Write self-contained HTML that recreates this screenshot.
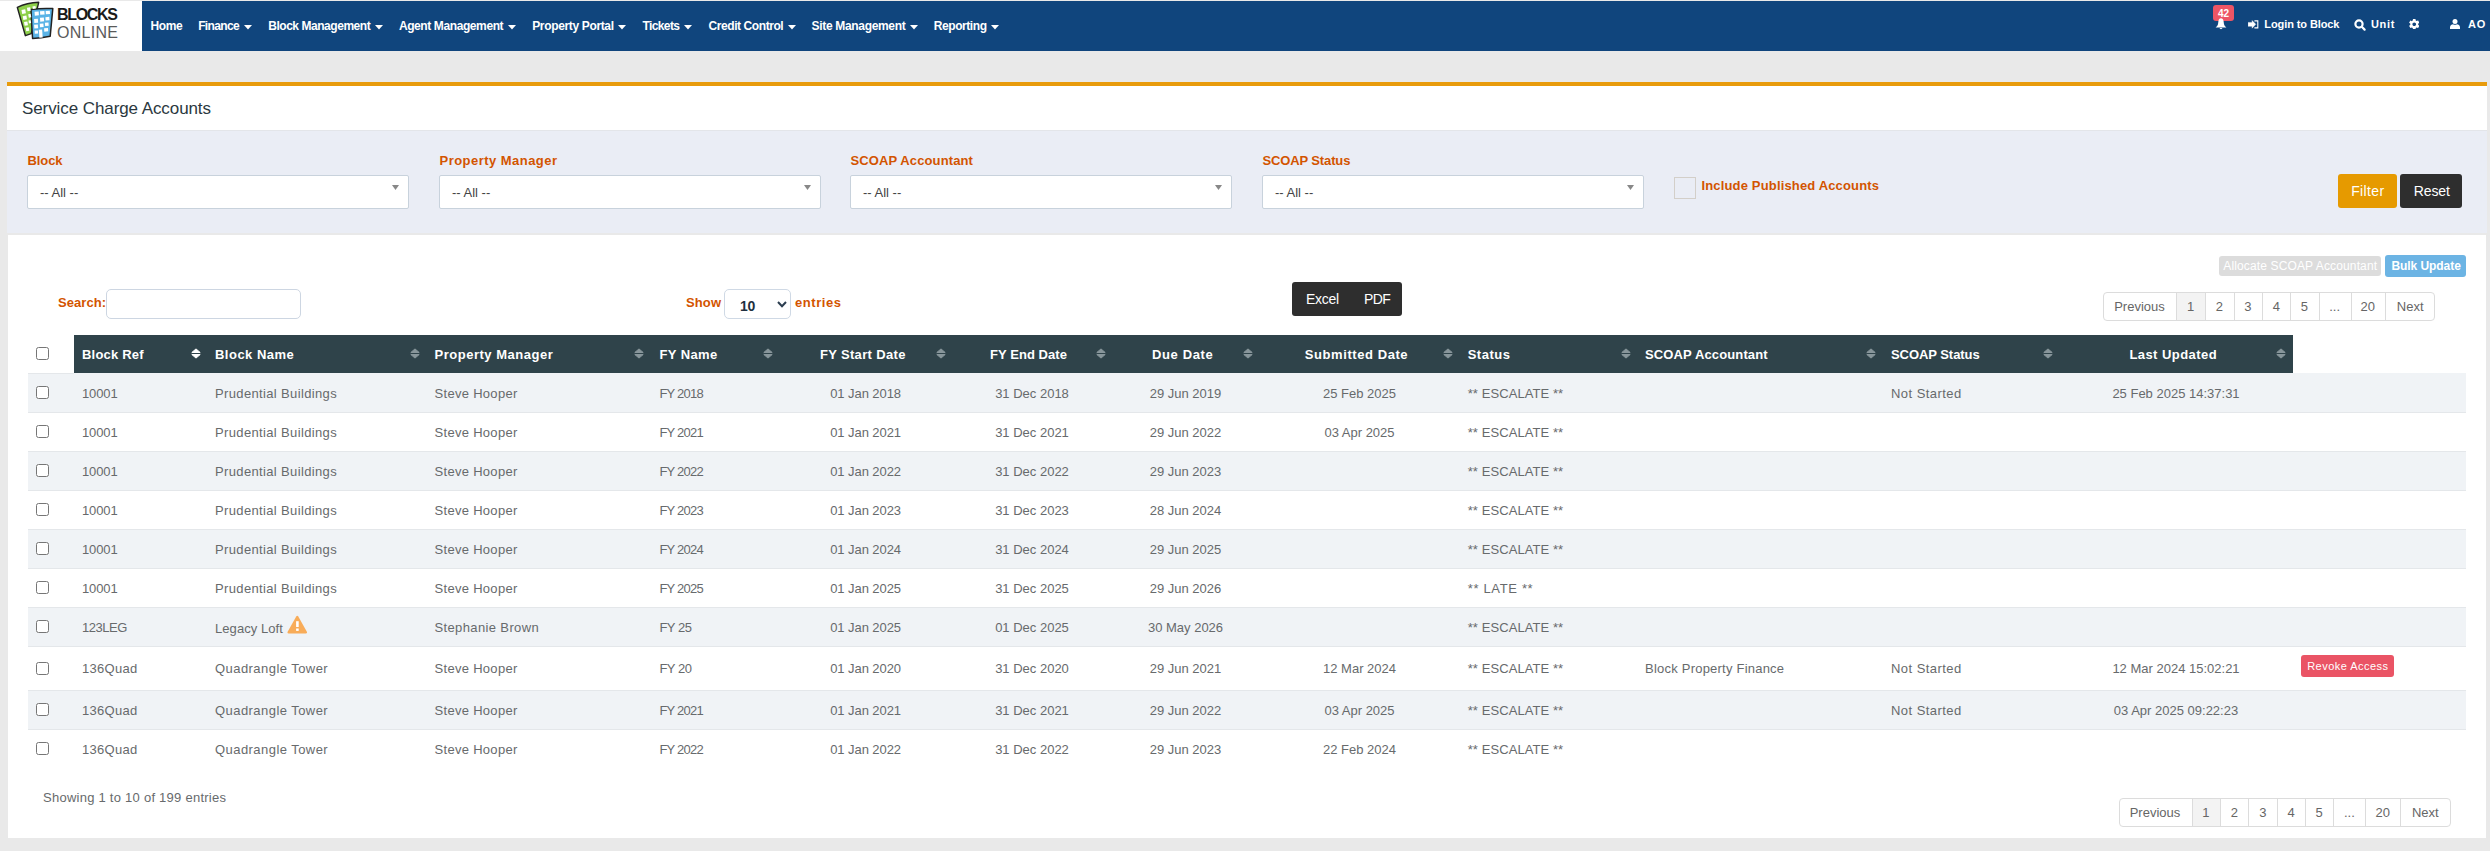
<!DOCTYPE html>
<html><head><meta charset="utf-8"><style>
html,body{margin:0;padding:0;}
body{width:2490px;height:851px;overflow:hidden;background:#e9e9e9;position:relative;font-family:"Liberation Sans",sans-serif;}
body>div{position:absolute;}
.t{line-height:20px;white-space:nowrap;}
</style></head><body>
<div style="left:0px;top:1px;width:142px;height:50px;background:#fff"></div>
<div style="left:142px;top:1px;width:2348px;height:50px;background:#10457d"></div>
<svg style="position:absolute;left:14px;top:0px" width="44" height="44" viewBox="0 0 44 44">
<path d="M3.3 7.3 Q13 3 24.7 2.3 L17.2 33.6 L11.4 35.7 Z" fill="#8dcf4a" stroke="#222" stroke-width="1.4" stroke-linejoin="round"/>
<path d="M17 9.4 Q28 8 38.8 8.6 Q37.5 22 36.2 36.2 Q27 38 18.6 38.5 Q17.5 24 17 9.4 Z" fill="#5ab3e6" stroke="#222" stroke-width="1.5" stroke-linejoin="round"/>
<g fill="#fff"><rect x="7.8" y="9.6" width="3.8" height="4.1" transform="rotate(-10 9.70 11.65)"/><rect x="13.2" y="7.5" width="3.3" height="3.6" transform="rotate(-10 14.85 9.30)"/><rect x="18.6" y="6.2" width="3.1" height="2.5" transform="rotate(-10 20.15 7.45)"/><rect x="9" y="15.8" width="3.7" height="3.8" transform="rotate(-10 10.85 17.70)"/><rect x="14.5" y="14" width="2.5" height="3.6" transform="rotate(-10 15.75 15.80)"/><rect x="10.3" y="21.7" width="3.4" height="3.9" transform="rotate(-10 12.00 23.65)"/><rect x="14.7" y="20.4" width="2.2" height="2.9" transform="rotate(-10 15.80 21.85)"/><rect x="11.9" y="27.4" width="3.1" height="3.6" transform="rotate(-10 13.45 29.20)"/><rect x="20.7" y="11.6" width="4.1" height="3.9" transform="rotate(-4 22.75 13.55)"/><rect x="26.1" y="11.1" width="4.4" height="3.6" transform="rotate(-4 28.30 12.90)"/><rect x="31.8" y="10.9" width="4.1" height="3.3" transform="rotate(-4 33.85 12.55)"/><rect x="20.2" y="18.9" width="3.8" height="3.9" transform="rotate(-4 22.10 20.85)"/><rect x="26.1" y="17.6" width="3.9" height="3.9" transform="rotate(-4 28.05 19.55)"/><rect x="31.5" y="17" width="3.9" height="3.4" transform="rotate(-4 33.45 18.70)"/><rect x="20.2" y="24.6" width="3.8" height="3.8" transform="rotate(-4 22.10 26.50)"/><rect x="25.9" y="23.5" width="3.6" height="3.6" transform="rotate(-4 27.70 25.30)"/><rect x="31" y="22.5" width="3.6" height="3.4" transform="rotate(-4 32.80 24.20)"/><rect x="20.7" y="30.5" width="3.3" height="3.1" transform="rotate(-4 22.35 32.05)"/><rect x="25.1" y="29.5" width="3.3" height="8.2" transform="rotate(-4 26.75 33.60)"/><rect x="30.2" y="28.2" width="3.9" height="3.3" transform="rotate(-4 32.15 29.85)"/></g></svg>
<div class="t" style="left:57px;top:5px;font-size:16px;color:#1a1a1a;letter-spacing:-1.319px;font-weight:bold;">BLOCKS</div>
<div class="t" style="left:57px;top:22.5px;font-size:16px;color:#5a5a5a;letter-spacing:0.278px;">ONLINE</div>
<div class="t" style="left:150.5px;top:16px;font-size:12px;color:#fff;letter-spacing:-0.381px;font-weight:bold;">Home</div>
<div class="t" style="left:198.2px;top:16px;font-size:12px;color:#fff;letter-spacing:-0.655px;font-weight:bold;">Finance</div>
<svg style="position:absolute;left:244px;top:25px" width="8" height="4.5" viewBox="0 0 8 4.5"><path d="M0 0H8L4 4.5Z" fill="#fff"/></svg>
<div class="t" style="left:268.2px;top:16px;font-size:12px;color:#fff;letter-spacing:-0.456px;font-weight:bold;">Block Management</div>
<svg style="position:absolute;left:375px;top:25px" width="8" height="4.5" viewBox="0 0 8 4.5"><path d="M0 0H8L4 4.5Z" fill="#fff"/></svg>
<div class="t" style="left:398.9px;top:16px;font-size:12px;color:#fff;letter-spacing:-0.398px;font-weight:bold;">Agent Management</div>
<svg style="position:absolute;left:508px;top:25px" width="8" height="4.5" viewBox="0 0 8 4.5"><path d="M0 0H8L4 4.5Z" fill="#fff"/></svg>
<div class="t" style="left:532.2px;top:16px;font-size:12px;color:#fff;letter-spacing:-0.348px;font-weight:bold;">Property Portal</div>
<svg style="position:absolute;left:618.4px;top:25px" width="8" height="4.5" viewBox="0 0 8 4.5"><path d="M0 0H8L4 4.5Z" fill="#fff"/></svg>
<div class="t" style="left:642.4px;top:16px;font-size:12px;color:#fff;letter-spacing:-0.587px;font-weight:bold;">Tickets</div>
<svg style="position:absolute;left:684px;top:25px" width="8" height="4.5" viewBox="0 0 8 4.5"><path d="M0 0H8L4 4.5Z" fill="#fff"/></svg>
<div class="t" style="left:708.5px;top:16px;font-size:12px;color:#fff;letter-spacing:-0.420px;font-weight:bold;">Credit Control</div>
<svg style="position:absolute;left:788px;top:25px" width="8" height="4.5" viewBox="0 0 8 4.5"><path d="M0 0H8L4 4.5Z" fill="#fff"/></svg>
<div class="t" style="left:811.6px;top:16px;font-size:12px;color:#fff;letter-spacing:-0.327px;font-weight:bold;">Site Management</div>
<svg style="position:absolute;left:910px;top:25px" width="8" height="4.5" viewBox="0 0 8 4.5"><path d="M0 0H8L4 4.5Z" fill="#fff"/></svg>
<div class="t" style="left:933.8px;top:16px;font-size:12px;color:#fff;letter-spacing:-0.432px;font-weight:bold;">Reporting</div>
<svg style="position:absolute;left:991px;top:25px" width="8" height="4.5" viewBox="0 0 8 4.5"><path d="M0 0H8L4 4.5Z" fill="#fff"/></svg>
<div style="left:2213px;top:5px;width:21px;height:16px;background:#ed5565;border-radius:3px"></div>
<div class="t" style="left:2213px;top:4px;font-size:10px;color:#fff;font-weight:bold;width:21px;text-align:center;">42</div>
<svg style="position:absolute;left:2215px;top:18px" width="12" height="12" viewBox="0 0 12 12"><path d="M6 0.2 C4.6 0.2 3.6 1.4 3.4 3.2 L3 6.3 Q2.6 8 0.6 9.5 H11.4 Q9.4 8 9 6.3 L8.6 3.2 C8.4 1.4 7.4 0.2 6 0.2Z M4.4 10.1 Q6 12.4 7.6 10.1Z" fill="#fff"/></svg>
<svg style="position:absolute;left:2248px;top:19.5px" width="11" height="9" viewBox="0 0 11 9"><path d="M0.1 2.4H4.1V0.5L7.8 4.35L4.1 8.2V6.3H0.1Z" fill="#fff" stroke="#fff" stroke-width="0.4" stroke-linejoin="round"/><path d="M6.4 0.9H9.8V7.9H6.4" fill="none" stroke="#fff" stroke-width="1.1"/></svg>
<div class="t" style="left:2264.3px;top:14px;font-size:11px;color:#fff;letter-spacing:-0.093px;font-weight:bold;">Login to Block</div>
<svg style="position:absolute;left:2353.5px;top:18.5px" width="12" height="12" viewBox="0 0 12 12"><circle cx="5" cy="5" r="3.6" fill="none" stroke="#fff" stroke-width="2.2"/><path d="M7.8 7.8L10.6 10.6" stroke="#fff" stroke-width="2.2" stroke-linecap="round"/></svg>
<div class="t" style="left:2371px;top:14px;font-size:11px;color:#fff;letter-spacing:0.675px;font-weight:bold;">Unit</div>
<svg style="position:absolute;left:2408.5px;top:18.5px" width="10.5" height="10.5" viewBox="2 2 20 20"><path fill="#fff" d="M19.4 13c.04-.33.1-.66.1-1s-.06-.67-.1-1l2.1-1.65c.2-.15.25-.42.13-.64l-2-3.46c-.12-.22-.39-.3-.61-.22l-2.49 1c-.52-.4-1.08-.73-1.69-.98l-.38-2.65C14.46 2.18 14.25 2 14 2h-4c-.25 0-.46.18-.49.42l-.38 2.65c-.61.25-1.17.59-1.69.98l-2.49-1c-.23-.09-.49 0-.61.22l-2 3.46c-.13.22-.07.49.12.64L4.57 11c-.04.33-.07.67-.07 1s.03.67.07 1l-2.11 1.65c-.19.15-.24.42-.12.64l2 3.46c.12.22.39.3.61.22l2.49-1c.52.4 1.08.73 1.69.98l.38 2.65c.03.24.24.42.49.42h4c.25 0 .46-.18.49-.42l.38-2.65c.61-.25 1.17-.59 1.69-.98l2.49 1c.23.09.49 0 .61-.22l2-3.46c.12-.22.07-.49-.12-.64L19.4 13zM12 15.5c-1.93 0-3.5-1.57-3.5-3.5s1.57-3.5 3.5-3.5 3.5 1.57 3.5 3.5-1.57 3.5-3.5 3.5z"/></svg>
<svg style="position:absolute;left:2450px;top:19px" width="10" height="10" viewBox="0 0 10 10"><circle cx="5" cy="2.6" r="2.5" fill="#fff"/><path d="M0 10V8.3C0 6.3 1.8 5.4 3 5.3Q5 6.3 7 5.3C8.2 5.4 10 6.3 10 8.3V10Z" fill="#fff"/></svg>
<div class="t" style="left:2468px;top:14px;font-size:11px;color:#fff;letter-spacing:0.800px;font-weight:bold;">AO</div>
<div style="left:7px;top:82px;width:2480px;height:4px;background:#e89b0c"></div>
<div style="left:7px;top:86px;width:2480px;height:44px;background:#fff"></div>
<div class="t" style="left:22px;top:99px;font-size:17px;color:#2b3840;letter-spacing:-0.085px;">Service Charge Accounts</div>
<div style="left:7px;top:130px;width:2480px;height:1px;background:#e3e5e9"></div>
<div style="left:7px;top:131px;width:2480px;height:102px;background:#eaedf5"></div>
<div style="left:8px;top:235px;width:2478px;height:603px;background:#fff"></div>
<div class="t" style="left:27.5px;top:151px;font-size:13px;color:#d35400;letter-spacing:-0.102px;font-weight:bold;">Block</div>
<div style="left:27px;top:175px;width:382px;height:34px;background:#fff;border:1px solid #c8d2dc;border-radius:2px;box-sizing:border-box"></div>
<div class="t" style="left:40px;top:183px;font-size:13px;color:#444;">-- All --</div>
<svg style="position:absolute;left:392px;top:185px" width="7" height="5" viewBox="0 0 7 5"><path d="M0 0H7L3.5 5Z" fill="#888"/></svg>
<div class="t" style="left:439.5px;top:151px;font-size:13px;color:#d35400;letter-spacing:0.464px;font-weight:bold;">Property Manager</div>
<div style="left:439px;top:175px;width:382px;height:34px;background:#fff;border:1px solid #c8d2dc;border-radius:2px;box-sizing:border-box"></div>
<div class="t" style="left:452px;top:183px;font-size:13px;color:#444;">-- All --</div>
<svg style="position:absolute;left:804px;top:185px" width="7" height="5" viewBox="0 0 7 5"><path d="M0 0H7L3.5 5Z" fill="#888"/></svg>
<div class="t" style="left:850.5px;top:151px;font-size:13px;color:#d35400;letter-spacing:0.118px;font-weight:bold;">SCOAP Accountant</div>
<div style="left:850px;top:175px;width:382px;height:34px;background:#fff;border:1px solid #c8d2dc;border-radius:2px;box-sizing:border-box"></div>
<div class="t" style="left:863px;top:183px;font-size:13px;color:#444;">-- All --</div>
<svg style="position:absolute;left:1215px;top:185px" width="7" height="5" viewBox="0 0 7 5"><path d="M0 0H7L3.5 5Z" fill="#888"/></svg>
<div class="t" style="left:1262.5px;top:151px;font-size:13px;color:#d35400;letter-spacing:-0.131px;font-weight:bold;">SCOAP Status</div>
<div style="left:1262px;top:175px;width:382px;height:34px;background:#fff;border:1px solid #c8d2dc;border-radius:2px;box-sizing:border-box"></div>
<div class="t" style="left:1275px;top:183px;font-size:13px;color:#444;">-- All --</div>
<svg style="position:absolute;left:1627px;top:185px" width="7" height="5" viewBox="0 0 7 5"><path d="M0 0H7L3.5 5Z" fill="#888"/></svg>
<div style="left:1674px;top:177px;width:22px;height:22px;border:1px solid #d3cfc9;box-sizing:border-box"></div>
<div class="t" style="left:1701.5px;top:176px;font-size:13px;color:#d35400;letter-spacing:0.157px;font-weight:bold;">Include Published Accounts</div>
<div style="left:2338px;top:174px;width:59px;height:34px;background:#e69a00;border-radius:3px"></div>
<div class="t" style="left:2351.2px;top:181px;font-size:14px;color:#fff;letter-spacing:0.361px;">Filter</div>
<div style="left:2400px;top:174px;width:62px;height:34px;background:#2e2e2e;border-radius:3px"></div>
<div class="t" style="left:2413.8px;top:181px;font-size:14px;color:#fff;letter-spacing:-0.116px;">Reset</div>
<div style="left:2219px;top:256px;width:162px;height:20px;background:#dcdcdc;border-radius:3px"></div>
<div class="t" style="left:2223.3px;top:256px;font-size:12px;color:#ffffff;letter-spacing:0.134px;">Allocate SCOAP Accountant</div>
<div style="left:2385px;top:255px;width:81px;height:22px;background:#6cb4e4;border-radius:3px"></div>
<div class="t" style="left:2391.5px;top:256px;font-size:12px;color:#fff;letter-spacing:-0.070px;font-weight:bold;">Bulk Update</div>
<div class="t" style="left:58px;top:293px;font-size:13px;color:#d35400;letter-spacing:0.049px;font-weight:bold;">Search:</div>
<div style="left:106px;top:289px;width:195px;height:30px;border:1px solid #cdd6e2;border-radius:5px;box-sizing:border-box"></div>
<div class="t" style="left:686px;top:293px;font-size:13px;color:#d35400;letter-spacing:0.115px;font-weight:bold;">Show</div>
<div style="left:724px;top:289px;width:67px;height:30px;border:1px solid #cfd9e5;border-radius:5px;box-sizing:border-box"></div>
<div class="t" style="left:740px;top:296px;font-size:14px;color:#1f3040;font-weight:bold;letter-spacing:-0.3px;">10</div>
<svg style="position:absolute;left:777px;top:301px" width="10" height="7" viewBox="0 0 10 7"><path d="M1 1L5 5.3L9 1" fill="none" stroke="#2c3e50" stroke-width="2"/></svg>
<div class="t" style="left:795px;top:293px;font-size:13px;color:#d35400;letter-spacing:0.560px;font-weight:bold;">entries</div>
<div style="left:1292px;top:282px;width:110px;height:34px;background:#2e2e2e;border-radius:3px"></div>
<div class="t" style="left:1306px;top:289px;font-size:14px;color:#fff;letter-spacing:-0.309px;">Excel</div>
<div class="t" style="left:1364px;top:289px;font-size:14px;color:#fff;letter-spacing:-0.650px;">PDF</div>
<div style="left:2103px;top:292px;width:332.4000000000001px;height:29px;border:1px solid #dcdcdc;border-radius:4px;box-sizing:border-box"></div>
<div class="t" style="left:2103px;top:297px;font-size:13px;color:#666;width:73px;text-align:center;">Previous</div>
<div style="left:2176px;top:293px;width:29px;height:27px;background:#f3f3f3"></div>
<div style="left:2176px;top:292px;width:1px;height:29px;background:#dcdcdc"></div>
<div class="t" style="left:2176px;top:297px;font-size:13px;color:#666;width:29px;text-align:center;">1</div>
<div style="left:2205px;top:292px;width:1px;height:29px;background:#dcdcdc"></div>
<div class="t" style="left:2205px;top:297px;font-size:13px;color:#666;width:28.5px;text-align:center;">2</div>
<div style="left:2233.5px;top:292px;width:1px;height:29px;background:#dcdcdc"></div>
<div class="t" style="left:2233.5px;top:297px;font-size:13px;color:#666;width:28.90000000000009px;text-align:center;">3</div>
<div style="left:2262.4px;top:292px;width:1px;height:29px;background:#dcdcdc"></div>
<div class="t" style="left:2262.4px;top:297px;font-size:13px;color:#666;width:27.90000000000009px;text-align:center;">4</div>
<div style="left:2290.3px;top:292px;width:1px;height:29px;background:#dcdcdc"></div>
<div class="t" style="left:2290.3px;top:297px;font-size:13px;color:#666;width:28.299999999999727px;text-align:center;">5</div>
<div style="left:2318.6px;top:292px;width:1px;height:29px;background:#dcdcdc"></div>
<div class="t" style="left:2318.6px;top:297px;font-size:13px;color:#666;width:32.0px;text-align:center;">...</div>
<div style="left:2350.6px;top:292px;width:1px;height:29px;background:#dcdcdc"></div>
<div class="t" style="left:2350.6px;top:297px;font-size:13px;color:#666;width:34.40000000000009px;text-align:center;">20</div>
<div style="left:2385px;top:292px;width:1px;height:29px;background:#dcdcdc"></div>
<div class="t" style="left:2385px;top:297px;font-size:13px;color:#666;width:50.40000000000009px;text-align:center;">Next</div>
<div style="left:2118.5px;top:798px;width:332.0px;height:29px;border:1px solid #dcdcdc;border-radius:4px;box-sizing:border-box"></div>
<div class="t" style="left:2118.5px;top:803px;font-size:13px;color:#666;width:73.0px;text-align:center;">Previous</div>
<div style="left:2191.5px;top:799px;width:28.800000000000182px;height:27px;background:#f3f3f3"></div>
<div style="left:2191.5px;top:798px;width:1px;height:29px;background:#dcdcdc"></div>
<div class="t" style="left:2191.5px;top:803px;font-size:13px;color:#666;width:28.800000000000182px;text-align:center;">1</div>
<div style="left:2220.3px;top:798px;width:1px;height:29px;background:#dcdcdc"></div>
<div class="t" style="left:2220.3px;top:803px;font-size:13px;color:#666;width:27.899999999999636px;text-align:center;">2</div>
<div style="left:2248.2px;top:798px;width:1px;height:29px;background:#dcdcdc"></div>
<div class="t" style="left:2248.2px;top:803px;font-size:13px;color:#666;width:29.200000000000273px;text-align:center;">3</div>
<div style="left:2277.4px;top:798px;width:1px;height:29px;background:#dcdcdc"></div>
<div class="t" style="left:2277.4px;top:803px;font-size:13px;color:#666;width:27.59999999999991px;text-align:center;">4</div>
<div style="left:2305px;top:798px;width:1px;height:29px;background:#dcdcdc"></div>
<div class="t" style="left:2305px;top:803px;font-size:13px;color:#666;width:28.300000000000182px;text-align:center;">5</div>
<div style="left:2333.3px;top:798px;width:1px;height:29px;background:#dcdcdc"></div>
<div class="t" style="left:2333.3px;top:803px;font-size:13px;color:#666;width:32.09999999999991px;text-align:center;">...</div>
<div style="left:2365.4px;top:798px;width:1px;height:29px;background:#dcdcdc"></div>
<div class="t" style="left:2365.4px;top:803px;font-size:13px;color:#666;width:34.79999999999973px;text-align:center;">20</div>
<div style="left:2400.2px;top:798px;width:1px;height:29px;background:#dcdcdc"></div>
<div class="t" style="left:2400.2px;top:803px;font-size:13px;color:#666;width:50.30000000000018px;text-align:center;">Next</div>
<div class="t" style="left:43px;top:788px;font-size:13px;color:#676a6c;letter-spacing:0.253px;">Showing 1 to 10 of 199 entries</div>
<div style="left:74px;top:335px;width:2219px;height:38px;background:#2f434a"></div>
<div style="left:36px;top:347px;width:13px;height:13px;background:#fff;border:1px solid #767676;border-radius:2.5px;box-sizing:border-box"></div>
<div class="t" style="left:82px;top:345px;font-size:13px;color:#fff;letter-spacing:0.204px;font-weight:bold;">Block Ref</div>
<svg style="position:absolute;left:190.6px;top:348px" width="10" height="11" viewBox="0 0 10 11"><path d="M5 0.9L9.2 4.5H0.8Z M5 10.1L9.2 6.5H0.8Z" fill="#fff" stroke="#fff" stroke-width="1" stroke-linejoin="round"/></svg>
<div class="t" style="left:215px;top:345px;font-size:13px;color:#fff;letter-spacing:0.485px;font-weight:bold;">Block Name</div>
<svg style="position:absolute;left:409.6px;top:348px" width="10" height="11" viewBox="0 0 10 11"><path d="M5 0.9L9.2 4.5H0.8Z M5 10.1L9.2 6.5H0.8Z" fill="#88969b" stroke="#88969b" stroke-width="1" stroke-linejoin="round"/></svg>
<div class="t" style="left:434.5px;top:345px;font-size:13px;color:#fff;letter-spacing:0.517px;font-weight:bold;">Property Manager</div>
<svg style="position:absolute;left:634.3px;top:348px" width="10" height="11" viewBox="0 0 10 11"><path d="M5 0.9L9.2 4.5H0.8Z M5 10.1L9.2 6.5H0.8Z" fill="#88969b" stroke="#88969b" stroke-width="1" stroke-linejoin="round"/></svg>
<div class="t" style="left:659.4px;top:345px;font-size:13px;color:#fff;letter-spacing:0.416px;font-weight:bold;">FY Name</div>
<svg style="position:absolute;left:763px;top:348px" width="10" height="11" viewBox="0 0 10 11"><path d="M5 0.9L9.2 4.5H0.8Z M5 10.1L9.2 6.5H0.8Z" fill="#88969b" stroke="#88969b" stroke-width="1" stroke-linejoin="round"/></svg>
<div class="t" style="left:819.9px;top:345px;font-size:13px;color:#fff;letter-spacing:0.349px;font-weight:bold;">FY Start Date</div>
<svg style="position:absolute;left:935.7px;top:348px" width="10" height="11" viewBox="0 0 10 11"><path d="M5 0.9L9.2 4.5H0.8Z M5 10.1L9.2 6.5H0.8Z" fill="#88969b" stroke="#88969b" stroke-width="1" stroke-linejoin="round"/></svg>
<div class="t" style="left:990px;top:345px;font-size:13px;color:#fff;letter-spacing:0.067px;font-weight:bold;">FY End Date</div>
<svg style="position:absolute;left:1095.5px;top:348px" width="10" height="11" viewBox="0 0 10 11"><path d="M5 0.9L9.2 4.5H0.8Z M5 10.1L9.2 6.5H0.8Z" fill="#88969b" stroke="#88969b" stroke-width="1" stroke-linejoin="round"/></svg>
<div class="t" style="left:1152px;top:345px;font-size:13px;color:#fff;letter-spacing:0.620px;font-weight:bold;">Due Date</div>
<svg style="position:absolute;left:1243px;top:348px" width="10" height="11" viewBox="0 0 10 11"><path d="M5 0.9L9.2 4.5H0.8Z M5 10.1L9.2 6.5H0.8Z" fill="#88969b" stroke="#88969b" stroke-width="1" stroke-linejoin="round"/></svg>
<div class="t" style="left:1304.8px;top:345px;font-size:13px;color:#fff;letter-spacing:0.574px;font-weight:bold;">Submitted Date</div>
<svg style="position:absolute;left:1443px;top:348px" width="10" height="11" viewBox="0 0 10 11"><path d="M5 0.9L9.2 4.5H0.8Z M5 10.1L9.2 6.5H0.8Z" fill="#88969b" stroke="#88969b" stroke-width="1" stroke-linejoin="round"/></svg>
<div class="t" style="left:1467.7px;top:345px;font-size:13px;color:#fff;letter-spacing:0.513px;font-weight:bold;">Status</div>
<svg style="position:absolute;left:1620.5px;top:348px" width="10" height="11" viewBox="0 0 10 11"><path d="M5 0.9L9.2 4.5H0.8Z M5 10.1L9.2 6.5H0.8Z" fill="#88969b" stroke="#88969b" stroke-width="1" stroke-linejoin="round"/></svg>
<div class="t" style="left:1645px;top:345px;font-size:13px;color:#fff;letter-spacing:0.132px;font-weight:bold;">SCOAP Accountant</div>
<svg style="position:absolute;left:1866.3px;top:348px" width="10" height="11" viewBox="0 0 10 11"><path d="M5 0.9L9.2 4.5H0.8Z M5 10.1L9.2 6.5H0.8Z" fill="#88969b" stroke="#88969b" stroke-width="1" stroke-linejoin="round"/></svg>
<div class="t" style="left:1891px;top:345px;font-size:13px;color:#fff;letter-spacing:-0.059px;font-weight:bold;">SCOAP Status</div>
<svg style="position:absolute;left:2043px;top:348px" width="10" height="11" viewBox="0 0 10 11"><path d="M5 0.9L9.2 4.5H0.8Z M5 10.1L9.2 6.5H0.8Z" fill="#88969b" stroke="#88969b" stroke-width="1" stroke-linejoin="round"/></svg>
<div class="t" style="left:2129.4px;top:345px;font-size:13px;color:#fff;letter-spacing:0.441px;font-weight:bold;">Last Updated</div>
<svg style="position:absolute;left:2276.2px;top:348px" width="10" height="11" viewBox="0 0 10 11"><path d="M5 0.9L9.2 4.5H0.8Z M5 10.1L9.2 6.5H0.8Z" fill="#88969b" stroke="#88969b" stroke-width="1" stroke-linejoin="round"/></svg>
<div style="left:28px;top:373px;width:2438px;height:39px;background:#f0f3f6"></div>
<div style="left:28px;top:373px;width:46px;height:1px;background:#e4e7ea"></div>
<div style="left:36px;top:386px;width:13px;height:13px;background:#fff;border:1px solid #767676;border-radius:2.5px;box-sizing:border-box"></div>
<div class="t" style="left:82px;top:384px;font-size:13px;color:#676a6c;letter-spacing:-0.118px;">10001</div>
<div class="t" style="left:215px;top:384px;font-size:13px;color:#676a6c;letter-spacing:0.355px;">Prudential Buildings</div>
<div class="t" style="left:434.5px;top:384px;font-size:13px;color:#676a6c;letter-spacing:0.299px;">Steve Hooper</div>
<div class="t" style="left:659.4px;top:384px;font-size:13px;color:#676a6c;letter-spacing:-0.754px;">FY 2018</div>
<div class="t" style="left:765.6px;top:384px;font-size:13px;color:#676a6c;letter-spacing:-0.059px;width:200px;text-align:center;">01 Jan 2018</div>
<div class="t" style="left:932px;top:384px;font-size:13px;color:#676a6c;width:200px;text-align:center;">31 Dec 2018</div>
<div class="t" style="left:1085.5px;top:384px;font-size:13px;color:#676a6c;width:200px;text-align:center;">29 Jun 2019</div>
<div class="t" style="left:1259.5px;top:384px;font-size:13px;color:#676a6c;width:200px;text-align:center;">25 Feb 2025</div>
<div class="t" style="left:1467.7px;top:384px;font-size:13px;color:#676a6c;letter-spacing:0.083px;">** ESCALATE **</div>
<div class="t" style="left:1891px;top:384px;font-size:13px;color:#676a6c;letter-spacing:0.453px;">Not Started</div>
<div class="t" style="left:2076px;top:384px;font-size:13px;color:#676a6c;width:200px;text-align:center;">25 Feb 2025 14:37:31</div>
<div style="left:28px;top:412px;width:2438px;height:39px;background:#fff"></div>
<div style="left:28px;top:412px;width:2438px;height:1px;background:#e4e7ea"></div>
<div style="left:36px;top:425px;width:13px;height:13px;background:#fff;border:1px solid #767676;border-radius:2.5px;box-sizing:border-box"></div>
<div class="t" style="left:82px;top:423px;font-size:13px;color:#676a6c;letter-spacing:-0.118px;">10001</div>
<div class="t" style="left:215px;top:423px;font-size:13px;color:#676a6c;letter-spacing:0.355px;">Prudential Buildings</div>
<div class="t" style="left:434.5px;top:423px;font-size:13px;color:#676a6c;letter-spacing:0.299px;">Steve Hooper</div>
<div class="t" style="left:659.4px;top:423px;font-size:13px;color:#676a6c;letter-spacing:-0.754px;">FY 2021</div>
<div class="t" style="left:765.6px;top:423px;font-size:13px;color:#676a6c;letter-spacing:-0.059px;width:200px;text-align:center;">01 Jan 2021</div>
<div class="t" style="left:932px;top:423px;font-size:13px;color:#676a6c;width:200px;text-align:center;">31 Dec 2021</div>
<div class="t" style="left:1085.5px;top:423px;font-size:13px;color:#676a6c;width:200px;text-align:center;">29 Jun 2022</div>
<div class="t" style="left:1259.5px;top:423px;font-size:13px;color:#676a6c;width:200px;text-align:center;">03 Apr 2025</div>
<div class="t" style="left:1467.7px;top:423px;font-size:13px;color:#676a6c;letter-spacing:0.083px;">** ESCALATE **</div>
<div style="left:28px;top:451px;width:2438px;height:39px;background:#f0f3f6"></div>
<div style="left:28px;top:451px;width:2438px;height:1px;background:#e4e7ea"></div>
<div style="left:36px;top:464px;width:13px;height:13px;background:#fff;border:1px solid #767676;border-radius:2.5px;box-sizing:border-box"></div>
<div class="t" style="left:82px;top:462px;font-size:13px;color:#676a6c;letter-spacing:-0.118px;">10001</div>
<div class="t" style="left:215px;top:462px;font-size:13px;color:#676a6c;letter-spacing:0.355px;">Prudential Buildings</div>
<div class="t" style="left:434.5px;top:462px;font-size:13px;color:#676a6c;letter-spacing:0.299px;">Steve Hooper</div>
<div class="t" style="left:659.4px;top:462px;font-size:13px;color:#676a6c;letter-spacing:-0.754px;">FY 2022</div>
<div class="t" style="left:765.6px;top:462px;font-size:13px;color:#676a6c;letter-spacing:-0.059px;width:200px;text-align:center;">01 Jan 2022</div>
<div class="t" style="left:932px;top:462px;font-size:13px;color:#676a6c;width:200px;text-align:center;">31 Dec 2022</div>
<div class="t" style="left:1085.5px;top:462px;font-size:13px;color:#676a6c;width:200px;text-align:center;">29 Jun 2023</div>
<div class="t" style="left:1467.7px;top:462px;font-size:13px;color:#676a6c;letter-spacing:0.083px;">** ESCALATE **</div>
<div style="left:28px;top:490px;width:2438px;height:39px;background:#fff"></div>
<div style="left:28px;top:490px;width:2438px;height:1px;background:#e4e7ea"></div>
<div style="left:36px;top:503px;width:13px;height:13px;background:#fff;border:1px solid #767676;border-radius:2.5px;box-sizing:border-box"></div>
<div class="t" style="left:82px;top:501px;font-size:13px;color:#676a6c;letter-spacing:-0.118px;">10001</div>
<div class="t" style="left:215px;top:501px;font-size:13px;color:#676a6c;letter-spacing:0.355px;">Prudential Buildings</div>
<div class="t" style="left:434.5px;top:501px;font-size:13px;color:#676a6c;letter-spacing:0.299px;">Steve Hooper</div>
<div class="t" style="left:659.4px;top:501px;font-size:13px;color:#676a6c;letter-spacing:-0.754px;">FY 2023</div>
<div class="t" style="left:765.6px;top:501px;font-size:13px;color:#676a6c;letter-spacing:-0.059px;width:200px;text-align:center;">01 Jan 2023</div>
<div class="t" style="left:932px;top:501px;font-size:13px;color:#676a6c;width:200px;text-align:center;">31 Dec 2023</div>
<div class="t" style="left:1085.5px;top:501px;font-size:13px;color:#676a6c;width:200px;text-align:center;">28 Jun 2024</div>
<div class="t" style="left:1467.7px;top:501px;font-size:13px;color:#676a6c;letter-spacing:0.083px;">** ESCALATE **</div>
<div style="left:28px;top:529px;width:2438px;height:39px;background:#f0f3f6"></div>
<div style="left:28px;top:529px;width:2438px;height:1px;background:#e4e7ea"></div>
<div style="left:36px;top:542px;width:13px;height:13px;background:#fff;border:1px solid #767676;border-radius:2.5px;box-sizing:border-box"></div>
<div class="t" style="left:82px;top:540px;font-size:13px;color:#676a6c;letter-spacing:-0.118px;">10001</div>
<div class="t" style="left:215px;top:540px;font-size:13px;color:#676a6c;letter-spacing:0.355px;">Prudential Buildings</div>
<div class="t" style="left:434.5px;top:540px;font-size:13px;color:#676a6c;letter-spacing:0.299px;">Steve Hooper</div>
<div class="t" style="left:659.4px;top:540px;font-size:13px;color:#676a6c;letter-spacing:-0.754px;">FY 2024</div>
<div class="t" style="left:765.6px;top:540px;font-size:13px;color:#676a6c;letter-spacing:-0.059px;width:200px;text-align:center;">01 Jan 2024</div>
<div class="t" style="left:932px;top:540px;font-size:13px;color:#676a6c;width:200px;text-align:center;">31 Dec 2024</div>
<div class="t" style="left:1085.5px;top:540px;font-size:13px;color:#676a6c;width:200px;text-align:center;">29 Jun 2025</div>
<div class="t" style="left:1467.7px;top:540px;font-size:13px;color:#676a6c;letter-spacing:0.083px;">** ESCALATE **</div>
<div style="left:28px;top:568px;width:2438px;height:39px;background:#fff"></div>
<div style="left:28px;top:568px;width:2438px;height:1px;background:#e4e7ea"></div>
<div style="left:36px;top:581px;width:13px;height:13px;background:#fff;border:1px solid #767676;border-radius:2.5px;box-sizing:border-box"></div>
<div class="t" style="left:82px;top:579px;font-size:13px;color:#676a6c;letter-spacing:-0.118px;">10001</div>
<div class="t" style="left:215px;top:579px;font-size:13px;color:#676a6c;letter-spacing:0.355px;">Prudential Buildings</div>
<div class="t" style="left:434.5px;top:579px;font-size:13px;color:#676a6c;letter-spacing:0.299px;">Steve Hooper</div>
<div class="t" style="left:659.4px;top:579px;font-size:13px;color:#676a6c;letter-spacing:-0.754px;">FY 2025</div>
<div class="t" style="left:765.6px;top:579px;font-size:13px;color:#676a6c;letter-spacing:-0.059px;width:200px;text-align:center;">01 Jan 2025</div>
<div class="t" style="left:932px;top:579px;font-size:13px;color:#676a6c;width:200px;text-align:center;">31 Dec 2025</div>
<div class="t" style="left:1085.5px;top:579px;font-size:13px;color:#676a6c;width:200px;text-align:center;">29 Jun 2026</div>
<div class="t" style="left:1467.7px;top:579px;font-size:13px;color:#676a6c;letter-spacing:0.665px;">** LATE **</div>
<div style="left:28px;top:607px;width:2438px;height:39px;background:#f0f3f6"></div>
<div style="left:28px;top:607px;width:2438px;height:1px;background:#e4e7ea"></div>
<div style="left:36px;top:620px;width:13px;height:13px;background:#fff;border:1px solid #767676;border-radius:2.5px;box-sizing:border-box"></div>
<div class="t" style="left:82px;top:618px;font-size:13px;color:#676a6c;letter-spacing:-0.464px;">123LEG</div>
<div class="t" style="left:215px;top:619px;font-size:13px;color:#676a6c;letter-spacing:0.067px;">Legacy Loft</div>
<div class="t" style="left:434.5px;top:618px;font-size:13px;color:#676a6c;letter-spacing:0.368px;">Stephanie Brown</div>
<div class="t" style="left:659.4px;top:618px;font-size:13px;color:#676a6c;letter-spacing:-0.463px;">FY 25</div>
<div class="t" style="left:765.6px;top:618px;font-size:13px;color:#676a6c;letter-spacing:-0.059px;width:200px;text-align:center;">01 Jan 2025</div>
<div class="t" style="left:932px;top:618px;font-size:13px;color:#676a6c;width:200px;text-align:center;">01 Dec 2025</div>
<div class="t" style="left:1085.5px;top:618px;font-size:13px;color:#676a6c;width:200px;text-align:center;">30 May 2026</div>
<div class="t" style="left:1467.7px;top:618px;font-size:13px;color:#676a6c;letter-spacing:0.083px;">** ESCALATE **</div>
<svg style="position:absolute;left:286.5px;top:614.8px" width="20.5" height="19" viewBox="0 0 20.5 19"><path d="M10.25 0.8 Q10.9 0.8 11.3 1.5 L20 17 Q20.3 18.5 18.8 18.6 H1.7 Q0.2 18.5 0.5 17 L9.2 1.5 Q9.6 0.8 10.25 0.8Z" fill="#f8ac59"/><rect x="9.1" y="6.2" width="2.6" height="5.8" fill="#fff"/><rect x="9.1" y="13.5" width="2.6" height="2.4" fill="#fff"/></svg>
<div style="left:28px;top:646px;width:2438px;height:44px;background:#fff"></div>
<div style="left:28px;top:646px;width:2438px;height:1px;background:#e4e7ea"></div>
<div style="left:36px;top:662px;width:13px;height:13px;background:#fff;border:1px solid #767676;border-radius:2.5px;box-sizing:border-box"></div>
<div class="t" style="left:82px;top:659px;font-size:13px;color:#676a6c;letter-spacing:0.297px;">136Quad</div>
<div class="t" style="left:215px;top:659px;font-size:13px;color:#676a6c;letter-spacing:0.445px;">Quadrangle Tower</div>
<div class="t" style="left:434.5px;top:659px;font-size:13px;color:#676a6c;letter-spacing:0.299px;">Steve Hooper</div>
<div class="t" style="left:659.4px;top:659px;font-size:13px;color:#676a6c;letter-spacing:-0.463px;">FY 20</div>
<div class="t" style="left:765.6px;top:659px;font-size:13px;color:#676a6c;letter-spacing:-0.059px;width:200px;text-align:center;">01 Jan 2020</div>
<div class="t" style="left:932px;top:659px;font-size:13px;color:#676a6c;width:200px;text-align:center;">31 Dec 2020</div>
<div class="t" style="left:1085.5px;top:659px;font-size:13px;color:#676a6c;width:200px;text-align:center;">29 Jun 2021</div>
<div class="t" style="left:1259.5px;top:659px;font-size:13px;color:#676a6c;width:200px;text-align:center;">12 Mar 2024</div>
<div class="t" style="left:1467.7px;top:659px;font-size:13px;color:#676a6c;letter-spacing:0.083px;">** ESCALATE **</div>
<div class="t" style="left:1645px;top:659px;font-size:13px;color:#676a6c;letter-spacing:0.223px;">Block Property Finance</div>
<div class="t" style="left:1891px;top:659px;font-size:13px;color:#676a6c;letter-spacing:0.453px;">Not Started</div>
<div class="t" style="left:2076px;top:659px;font-size:13px;color:#676a6c;width:200px;text-align:center;">12 Mar 2024 15:02:21</div>
<div style="left:2301px;top:655px;width:93px;height:22px;background:#ea5465;border-radius:3px"></div>
<div class="t" style="left:2307.2px;top:656px;font-size:11px;color:#fff;letter-spacing:0.464px;">Revoke Access</div>
<div style="left:28px;top:690px;width:2438px;height:39px;background:#f0f3f6"></div>
<div style="left:28px;top:690px;width:2438px;height:1px;background:#e4e7ea"></div>
<div style="left:36px;top:703px;width:13px;height:13px;background:#fff;border:1px solid #767676;border-radius:2.5px;box-sizing:border-box"></div>
<div class="t" style="left:82px;top:701px;font-size:13px;color:#676a6c;letter-spacing:0.297px;">136Quad</div>
<div class="t" style="left:215px;top:701px;font-size:13px;color:#676a6c;letter-spacing:0.445px;">Quadrangle Tower</div>
<div class="t" style="left:434.5px;top:701px;font-size:13px;color:#676a6c;letter-spacing:0.299px;">Steve Hooper</div>
<div class="t" style="left:659.4px;top:701px;font-size:13px;color:#676a6c;letter-spacing:-0.754px;">FY 2021</div>
<div class="t" style="left:765.6px;top:701px;font-size:13px;color:#676a6c;letter-spacing:-0.059px;width:200px;text-align:center;">01 Jan 2021</div>
<div class="t" style="left:932px;top:701px;font-size:13px;color:#676a6c;width:200px;text-align:center;">31 Dec 2021</div>
<div class="t" style="left:1085.5px;top:701px;font-size:13px;color:#676a6c;width:200px;text-align:center;">29 Jun 2022</div>
<div class="t" style="left:1259.5px;top:701px;font-size:13px;color:#676a6c;width:200px;text-align:center;">03 Apr 2025</div>
<div class="t" style="left:1467.7px;top:701px;font-size:13px;color:#676a6c;letter-spacing:0.083px;">** ESCALATE **</div>
<div class="t" style="left:1891px;top:701px;font-size:13px;color:#676a6c;letter-spacing:0.453px;">Not Started</div>
<div class="t" style="left:2076px;top:701px;font-size:13px;color:#676a6c;width:200px;text-align:center;">03 Apr 2025 09:22:23</div>
<div style="left:28px;top:729px;width:2438px;height:39px;background:#fff"></div>
<div style="left:28px;top:729px;width:2438px;height:1px;background:#e4e7ea"></div>
<div style="left:36px;top:742px;width:13px;height:13px;background:#fff;border:1px solid #767676;border-radius:2.5px;box-sizing:border-box"></div>
<div class="t" style="left:82px;top:740px;font-size:13px;color:#676a6c;letter-spacing:0.297px;">136Quad</div>
<div class="t" style="left:215px;top:740px;font-size:13px;color:#676a6c;letter-spacing:0.445px;">Quadrangle Tower</div>
<div class="t" style="left:434.5px;top:740px;font-size:13px;color:#676a6c;letter-spacing:0.299px;">Steve Hooper</div>
<div class="t" style="left:659.4px;top:740px;font-size:13px;color:#676a6c;letter-spacing:-0.754px;">FY 2022</div>
<div class="t" style="left:765.6px;top:740px;font-size:13px;color:#676a6c;letter-spacing:-0.059px;width:200px;text-align:center;">01 Jan 2022</div>
<div class="t" style="left:932px;top:740px;font-size:13px;color:#676a6c;width:200px;text-align:center;">31 Dec 2022</div>
<div class="t" style="left:1085.5px;top:740px;font-size:13px;color:#676a6c;width:200px;text-align:center;">29 Jun 2023</div>
<div class="t" style="left:1259.5px;top:740px;font-size:13px;color:#676a6c;width:200px;text-align:center;">22 Feb 2024</div>
<div class="t" style="left:1467.7px;top:740px;font-size:13px;color:#676a6c;letter-spacing:0.083px;">** ESCALATE **</div>
</body></html>
